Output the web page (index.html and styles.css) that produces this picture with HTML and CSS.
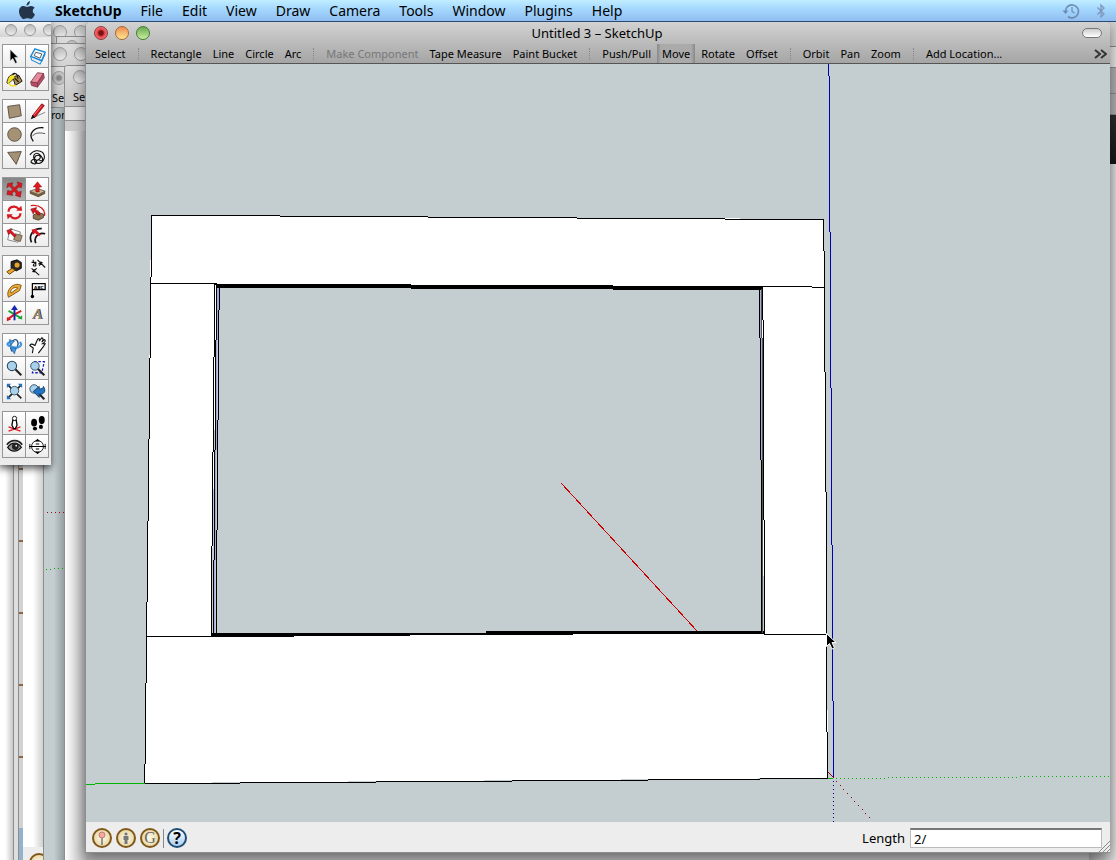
FILE: index.html
```
<!doctype html>
<html lang="en">

<head>
  <meta charset="utf-8">
  <title>Untitled 3 – SketchUp</title>
  <link rel="stylesheet" href="styles.css">
</head>

<body>
  <nav class="menubar">
    <button class="apple" aria-label="Apple menu">
      <svg width="18" height="20" viewBox="0 0 18 20">
        <path fill="#24354a" d="M12 0C12 2.600 10.500 4.400 8.500 4.800C8.400 2.500 10 .6 12 0ZM9.200 6C10.300 6 11.200 5 13 5C14.600 5 15.800 5.700 16.600 6.800C14 8.400 14.300 12.200 17 13.300C16 16 14.500 18 13 18C11.600 18 11.100 17.300 9.500 17.300C7.900 17.300 7.400 18 6 18C3.800 18 1 13.800 1 10.400C1 7 3.100 5 5.500 5C7.100 5 8.200 6 9.200 6Z" />
      </svg>
    </button>
    <button><b>SketchUp</b></button>
    <button>File</button>
    <button>Edit</button>
    <button>View</button>
    <button>Draw</button>
    <button>Camera</button>
    <button>Tools</button>
    <button>Window</button>
    <button>Plugins</button>
    <button>Help</button>
    <div class="extras">
      <svg width="18" height="18" viewBox="0 0 18 18" fill="none" stroke="#6f8cb0" stroke-width="1.600">
        <path d="M3.500 10A6.500 6.500 0 1 1 6 14.500" />
        <path d="M10 5V9.500L12.500 11" stroke-width="1.200" />
        <path d="M.5 8.500H6.500L3.500 12Z" fill="#6f8cb0" stroke="none" />
      </svg>
      <svg width="10" height="16" viewBox="0 0 10 16" fill="none" stroke="#7d98bb" stroke-width="1.300">
        <path d="M1.500 4.500L8 11L5 14V2L8 5L1.500 11.500" />
      </svg>
    </div>
  </nav>

  <main class="desktop">
    <!-- windows behind the front one, back to front -->
    <div class="window far-a"></div>
    <div class="window far-b"></div>
    <div class="window far-c">
      <div class="statusbar"><span class="coin"></span></div>
    </div>
    <div class="window stack-a">
      <div class="lights off"><i></i><i></i><i></i></div>
    </div>
    <div class="window stack-b">
      <div class="lights off"><i></i><i></i><i></i></div>
    </div>
    <div class="window stack-c">
      <div class="lights off"><i></i><i></i><i></i></div>
    </div>
    <div class="window model">
      <div class="lights off edited"><i></i><i></i><i></i></div>
      <div class="back-tools">Se</div>
      <div class="scene">Fron</div>
      <svg class="back-axes" width="24" height="70" viewBox="0 0 24 70" shape-rendering="crispEdges">
        <path d="M3 5.500H24" stroke="#a00000" stroke-dasharray="1 3" />
        <path d="M2 62.500H10" stroke="#00a800" stroke-dasharray="1 3" />
        <path d="M10 61.500H24" stroke="#00a800" stroke-dasharray="1 3" />
      </svg>
    </div>
    <div class="window page">
      <div class="lights off"><i></i><i></i><i></i></div>
      <div class="back-tools">Se</div>
      <div class="strip"></div>
      <div class="band"></div>
    </div>
    <div class="edge">
      <div class="edge-title"></div>
      <div class="edge-light"></div>
      <div class="edge-gray"></div>
      <div class="edge-gray"></div>
      <div class="edge-black"></div>
    </div>

    <section class="window front">
      <header class="head">
        <div class="titlebar">
          <div class="lights">
            <button class="red" aria-label="Close"></button>
            <button class="amber" aria-label="Minimize"></button>
            <button class="green" aria-label="Zoom window"></button>
          </div>
          <h1>Untitled 3 – SketchUp</h1>
          <button class="pill" aria-label="Toggle toolbar"></button>
        </div>
        <div class="toolbar">
          <button>Select</button>
          <span class="sep"></span>
          <button>Rectangle</button>
          <button>Line</button>
          <button>Circle</button>
          <button>Arc</button>
          <span class="sep"></span>
          <button disabled>Make Component</button>
          <button>Tape Measure</button>
          <button>Paint Bucket</button>
          <span class="sep"></span>
          <button>Push/Pull</button>
          <button class="pressed">Move</button>
          <button>Rotate</button>
          <button>Offset</button>
          <span class="sep"></span>
          <button>Orbit</button>
          <button>Pan</button>
          <button>Zoom</button>
          <span class="sep"></span>
          <button>Add Location...</button>
          <button class="more" aria-label="More tools">
            <svg width="13" height="10" viewBox="0 0 13 10" fill="none" stroke="#333" stroke-width="2">
              <path d="M1 1L6 5L1 9M7 1L12 5L7 9" />
            </svg>
          </button>
        </div>
      </header>

      <div class="canvas">
        <svg class="drawing" viewBox="86 64 1024 758" preserveAspectRatio="xMinYMin slice" shape-rendering="crispEdges" fill="none">
          <!-- blue axis -->
          <path d="M828.500 64V76M829.500 76V232M830.500 232V388M831.500 388V545M832.500 545V701M833.500 701V778" stroke="#0000b4" />
          <path d="M833.500 781V822" stroke="#00008c" stroke-dasharray="1 3" />
          <!-- frame -->
          <path fill="#fff" fill-rule="evenodd" d="M151 215L824 219L828 778L145 783ZM217 285L211 636L764 633L761 288Z" />
          <path stroke="#000" d="M151.500 215.500H280M280 216.500H428M428 217.500H577M577 218.500H725M725 219.500H824" />
          <path stroke="#000" d="M151.500 215V277M150.500 277V358M149.500 358V439M148.500 439V521M147.500 521V602M146.500 602V683M145.500 683V764M144.500 764V783" />
          <path stroke="#000" d="M823.500 219V251M824.500 251V372M825.500 372V492M826.500 492V612M826.500 612V732M827.500 732V778" />
          <path stroke="#000" d="M144 783.500H240M240 782.500H376M376 781.500H512M512 780.500H648M648 779.500H760M760 778.500H828" />
          <path stroke="#000" d="M150 283.500H217M762 286.500H812M812 287.500H825M147 636.500H294M764 634.500H826" />
          <!-- inner edges -->
          <path fill="#000" d="M215 284H411V285H613V286H762V290H613V289H411V288H217ZM211 633H486V631H650V631H764V634H573V635H410V636H211Z" />
          <path stroke="#000" d="M214.500 284V357M213.500 357V452M212.500 452V546M211.500 546V636" />
          <path stroke="#000" d="M216.500 286V340M215.500 340V450M214.500 450V560M213.500 560V634" />
          <path stroke="#a8a8e0" d="M217.500 288V340M216.500 340V450M215.500 450V560M214.500 560V633" />
          <path stroke="#000" d="M219.500 287V310M218.500 310V420M217.500 420V530M216.500 530V634" />
          <path stroke="#a8a8e0" d="M218.500 288V310" />
          <path stroke="#000" d="M759.500 289V338M760.500 338V460M761.500 460V633" />
          <path stroke="#a8a8e0" d="M760.500 290V338M761.500 338V460" />
          <path stroke="#555" d="M761.500 289V338M762.500 338V633" />
          <path stroke="#000" d="M762.500 287V320M763.500 320V520M764.500 520V634" />
          <!-- move line and red axis -->
          <path d="M561.500 483.500L697.500 631.500" stroke="#c80000" />
          <path d="M828 772L834 778" stroke="#a00000" />
          <path d="M836 781.500h1M840 785.500h1M843 789.500h1M847 793.500h1M851 797.500h1M854 801.500h1M858 805.500h1M862 809.500h1M865 813.500h1M869 817.500h1" stroke="#a00000" />
          <!-- green axis -->
          <path d="M86 784.500H95M95 783.500H145M828 778.500H833" stroke="#00b400" />
          <path d="M836 778.500H888M888 777.500H1018M1020 776.500H1110" stroke="#00b400" stroke-dasharray="1 3" />
          <!-- pointer -->
          <path shape-rendering="auto" d="M826.500 633.500V646.500L829.500 643.500L832 649L834.500 648L832 642.500H836Z" fill="#000" stroke="#fff" />
        </svg>
      </div>

      <footer class="statusbar">
        <button class="coin" aria-label="Geo-location">
          <svg width="16" height="16" viewBox="0 0 16 16">
            <path d="M8 7V15" stroke="#777" stroke-width="1.500" />
            <circle cx="8" cy="5" r="3" fill="#f4a8a0" stroke="#c08078" />
          </svg>
        </button>
        <button class="coin" aria-label="Credits">
          <svg width="16" height="16" viewBox="0 0 16 16" fill="#777">
            <circle cx="8" cy="4" r="1.600" />
            <path d="M5.500 6H10.500V10H9.500V14H6.500V10H5.500Z" />
          </svg>
        </button>
        <button class="coin letter">G</button>
        <span class="divider"></span>
        <button class="coin help">?</button>
        <label for="length">Length</label>
        <input id="length" type="text" value="2/">
        <svg class="grip" width="12" height="12" viewBox="0 0 12 12" stroke="#888">
          <path d="M1 12L12 1M5 12L12 5M9 12L12 9" />
        </svg>
      </footer>
    </section>

    <aside class="palette">
      <div class="lights off"><i></i><i></i><i></i></div>
      <div class="group">
        <button aria-label="Select"><svg viewBox="0 0 20 20"><path d="M5 2V15L8 12L11 18L13 17L10 11H14Z" fill="#000" stroke="#bbb" stroke-width=".6" /></svg></button>
        <button aria-label="Make Component"><svg viewBox="0 0 20 20" fill="none" stroke="#1687d4" stroke-width="1.600"><path d="M7 1L19 5L15 15L2 10Z" /><path d="M8 5L15 7L13 12L6 9Z" fill="#fff" stroke="#345" stroke-width="1" /><path d="M2 10L3 14L13 19L15 15L19 7" stroke-width="1.200" /></svg></button>
        <button aria-label="Paint Bucket"><svg viewBox="0 0 20 20"><path d="M8 7L15 5L19 12L11 17Z" fill="#a98a50" stroke="#000" /><path d="M6 8C8 0 14 2 14 9M8 6L15 13" fill="none" stroke="#111" stroke-width="1.300" /><path d="M10 4C3 4 2 9 1 14C4 17 5 11 10 9" fill="#f4df29" stroke="#222" /><path d="M3 14C5 18 9 18 12 17" fill="none" stroke="#f4df29" stroke-width="1.500" /></svg></button>
        <button aria-label="Eraser"><svg viewBox="0 0 20 20"><path d="M2 13L10 2L17 3L10 14Z" fill="#e68b9d" stroke="#823849" /><path d="M2 13L10 14V19L3 17ZM10 14L17 3L18 8L10 19Z" fill="#b44d66" stroke="#823849" /></svg></button>
      </div>
      <div class="group">
        <button aria-label="Rectangle"><svg viewBox="0 0 20 20"><path d="M2 4L16 2L18 15L4 18Z" fill="#a59174" stroke="#4e4537" /></svg></button>
        <button aria-label="Line"><svg viewBox="0 0 20 20"><path d="M3 18L19 11" stroke="#777" /><path d="M4 15L15 1L18 3L7 17Z" fill="#e01822" stroke="#500" stroke-width=".8" /><path d="M2 19L4 14L7 17Z" fill="#111" /><path d="M6 14L15 3" stroke="#ff8080" /></svg></button>
        <button aria-label="Circle"><svg viewBox="0 0 20 20"><circle cx="10" cy="10" r="8" fill="#a59174" stroke="#4e4537" /></svg></button>
        <button aria-label="Arc"><svg viewBox="0 0 20 20" fill="none" stroke="#111" stroke-width="1.600"><path d="M5 18C-2 9 6 1 17 2" /><path d="M4 12C6 9 10 7 19 9" stroke-width=".8" /></svg></button>
        <button aria-label="Polygon"><svg viewBox="0 0 20 20"><path d="M2 4L18 3L12 18Z" fill="#a59174" stroke="#4e4537" /></svg></button>
        <button aria-label="Freehand"><svg viewBox="0 0 20 20" fill="none" stroke="#111" stroke-width="1.300"><path d="M1 7C5 1 12 1 16 4C21 10 16 17 11 17C6 17 5 11 8 8C12 6 15 9 12 12C8 15 4 12 6 7C9 3 12 6 14 8C18 13 15 16 11 12M2 15C5 10 9 11 9 16C7 19 4 17 2 15" /></svg></button>
      </div>
      <div class="group">
        <button class="pressed" aria-label="Move"><svg viewBox="0 0 20 20"><path d="M2 3L8 2L7 5L10 8L14 4L13 1L19 3L18 8L15 7L12 10L15 13L18 12L17 19L11 17L12 15L10 12L7 14L8 17L1 16L2 11L5 12L8 10L4 6L1 8Z" fill="#d81820" stroke="#701014" stroke-width=".5" /></svg></button>
        <button aria-label="Push/Pull"><svg viewBox="0 0 20 20"><path d="M1 12L10 9L19 12L11 16Z" fill="#cdb58b" stroke="#555" /><path d="M1 12V15L11 19L19 15V12L11 16Z" fill="#705c3e" /><path d="M8 13V7H5L10 1L15 7H12V13Z" fill="#e01820" stroke="#700" stroke-width=".5" /></svg></button>
        <button aria-label="Rotate"><svg viewBox="0 0 20 20" fill="none" stroke="#d81820" stroke-width="2.500"><path d="M3 9C3 3 11 1 15 6M17 11C17 17 9 19 5 14" /><path d="M12 8L19 8L18 2ZM8 12L1 12L2 18Z" fill="#d81820" stroke="none" /></svg></button>
        <button aria-label="Follow Me"><svg viewBox="0 0 20 20"><path d="M5 13L11 10L17 12V16L11 19L5 17Z" fill="#8a7350" stroke="#4d402c" /><path d="M2 2C13 0 20 7 18 14" fill="none" stroke="#d81820" stroke-width="1.600" /><path d="M2 6L9 4L8 7C12 8 13 10 13 13H10C9 11 8 10 6 9L5 12Z" fill="#d81820" stroke="#600" stroke-width=".5" /></svg></button>
        <button aria-label="Scale"><svg viewBox="0 0 20 20"><path d="M5 2L17 6L14 18L2 15Z" fill="#fff" stroke="#777" /><path d="M11 8L19 10L17 17L9 15Z" fill="#a59174" stroke="#665842" /><path d="M1 4L7 2L6 4L12 10L10 12L5 7L3 9Z" fill="#d81820" stroke="#600" stroke-width=".5" /></svg></button>
        <button aria-label="Offset"><svg viewBox="0 0 20 20" fill="none" stroke="#111" stroke-width="2"><path d="M3 18C-1 10 5 1 15 2M8 19C5 12 11 6 19 8" /><path d="M3 3L10 2L9 4L14 9L12 11L7 7L5 9Z" fill="#d81820" stroke="none" /></svg></button>
      </div>
      <div class="group">
        <button aria-label="Tape Measure"><svg viewBox="0 0 20 20"><path d="M6 3L13 1L18 4V11L12 14L6 11Z" fill="#292824" stroke="#000" /><circle cx="13" cy="7" r="3" fill="#e9a326" /><path d="M7 11L1 15L4 18L11 13Z" fill="#f0a527" stroke="#51360a" /></svg></button>
        <button aria-label="Dimension"><svg viewBox="0 0 20 20" fill="none" stroke="#111" stroke-width="1.300"><path d="M3 4H8V8C4 9 4 6 8 5M5 1V4M3 11L12 19M10 1L19 10M6 14L9 11M12 8L14 5M4 15L8 12M11 6L16 4M6 12V16M14 3V7" /></svg></button>
        <button aria-label="Protractor"><svg viewBox="0 0 20 20"><path d="M3 18C-1 10 9 -1 18 4L16 10Z" fill="#eba832" stroke="#704b11" /><path d="M6 13C4 9 10 5 14 7Z" fill="#fff" stroke="#704b11" /></svg></button>
        <button aria-label="Text"><svg viewBox="0 0 20 20"><path d="M4 17V2H19V9H4" fill="#fff" stroke="#000" stroke-width="1.500" /><circle cx="4" cy="17" r="2" /><text class="tag" x="6" y="8">ABC</text></svg></button>
        <button aria-label="Axes"><svg viewBox="0 0 20 20" stroke-width="2.300"><path d="M10 11L3 7M10 11L17 15" stroke="#16a832" /><path d="M10 11L3 16M10 11L18 7" stroke="#d81820" /><path d="M10 18V4" stroke="#1726b0" /><path d="M6 6L10 0L14 6Z" fill="#1726b0" /><path d="M1 14V19L6 17Z" fill="#d81820" /><path d="M19 12V17L14 16Z" fill="#16a832" /></svg></button>
        <button aria-label="3D Text"><svg viewBox="0 0 20 20"><text class="deep" x="5" y="17">A</text><text class="deep face" x="4" y="16">A</text></svg></button>
      </div>
      <div class="group">
        <button aria-label="Orbit"><svg viewBox="0 0 20 20" fill="none"><path d="M7 17C3 9 9 0 13 4C16 8 13 14 9 16" stroke="#26527f" stroke-width="1.500" /><path d="M16 6C21 9 15 14 9 12C2 11 -1 8 5 6" stroke="#3f97e4" stroke-width="2.500" /><path d="M5 13L12 13L10 20ZM4 3L10 5L5 10Z" fill="#3f97e4" stroke="#123b68" stroke-width=".5" /></svg></button>
        <button aria-label="Pan"><svg viewBox="0 0 20 20"><path d="M4 19L5 13L1 10C2 7 5 9 7 10L10 3C11 1 13 2 12 5L15 1C17 1 17 3 15 6L18 3C20 4 19 6 16 8L19 8C17 12 14 15 11 19" fill="#fff" stroke="#111" stroke-width="1.300" /></svg></button>
        <button aria-label="Zoom"><svg viewBox="0 0 20 20"><path d="M11 11L18 18" stroke="#222" stroke-width="2.500" /><circle cx="7" cy="7" r="5.500" fill="#a9d1e9" stroke="#26465b" stroke-width="1.200" /></svg></button>
        <button aria-label="Zoom Window"><svg viewBox="0 0 20 20"><path d="M6 2H18L15 15H4Z" fill="none" stroke="#161cc0" stroke-width="1.500" stroke-dasharray="3 2" /><path d="M10 10L18 18" stroke="#222" stroke-width="2.500" /><circle cx="7" cy="7" r="5" fill="#a9d1e9" stroke="#26465b" /></svg></button>
        <button aria-label="Zoom Extents"><svg viewBox="0 0 20 20"><path d="M3 3L18 18M17 3L3 17" stroke="#222" stroke-width="2" /><path d="M1 1H6L1 6ZM19 1V6L14 1ZM1 19V14L6 19Z" fill="#2373c4" /><circle cx="10" cy="9" r="5" fill="#a9d1e9" stroke="#26465b" /></svg></button>
        <button aria-label="Previous View"><svg viewBox="0 0 20 20"><path d="M12 13L18 19" stroke="#222" stroke-width="2.500" /><circle cx="6" cy="7" r="5" fill="#a9d1e9" stroke="#26465b" /><path d="M5 10L12 4V7C15 7 17 6 17 4C21 10 17 14 12 13V17Z" fill="#2373c4" stroke="#11355d" /></svg></button>
      </div>
      <div class="group">
        <button aria-label="Position Camera"><svg viewBox="0 0 20 20"><path d="M3 14L17 19M17 14L3 19" stroke="#e01820" stroke-width="1.500" /><path d="M8 6H12L13 12L11 16H9L7 12Z" fill="#fff" stroke="#000" stroke-width="1.500" /><circle cx="10" cy="4" r="2.500" fill="#fff" stroke="#000" /></svg></button>
        <button aria-label="Walk"><svg viewBox="0 0 20 20"><ellipse cx="6" cy="9" rx="3.500" ry="4.500" /><ellipse cx="7" cy="16" rx="2.500" ry="2.200" /><ellipse cx="15" cy="6" rx="3.500" ry="4.800" /><ellipse cx="14" cy="14" rx="2.400" ry="2.400" /></svg></button>
        <button aria-label="Look Around"><svg viewBox="0 0 20 20"><path d="M1 8C6 1 15 2 19 8" fill="none" stroke="#222" stroke-width="2" /><path d="M2 11C7 4 14 5 18 11C13 17 6 17 2 11Z" fill="#999" stroke="#111" stroke-width="1.500" /><circle cx="11" cy="10" r="4" fill="#222" /><circle cx="12" cy="9" r="1" fill="#fff" /></svg></button>
        <button aria-label="Section Plane"><svg viewBox="0 0 20 20"><circle cx="10" cy="10" r="7" fill="#fff" stroke="#000" /><path d="M7 4L10 1L13 4ZM7 16L10 19L13 16Z" fill="#000" /><path d="M0 10H20M8 7H12M8 13H12" stroke="#000" stroke-width="1.300" /><path d="M1 7V13M19 7V13" stroke="#000" stroke-width="1" /></svg></button>
      </div>
    </aside>
  </main>
</body>

</html>
```
FILE: styles.css
```
* {
  box-sizing: border-box;
}

body {
  margin: 0;
  height: 100vh;
  display: flex;
  flex-direction: column;
  overflow: hidden;
  font-family: "Noto Sans", "Open Sans", sans-serif;
  color: #000;
}

button {
  font: inherit;
  color: inherit;
  margin: 0;
  padding: 0;
  border: 0;
  background: none;
}

svg {
  display: block;
}

/* menu bar */
.menubar {
  flex: none;
  display: flex;
  align-items: center;
  gap: 19px;
  height: 22px;
  padding: 0 10px 0 18px;
  font-size: 14px;
  line-height: 20px;
  background: linear-gradient(#c0edff, #a6d9ff 40%, #90bdf0);
  border-bottom: 1px solid #2c4a70;
}

.extras {
  display: flex;
  align-items: center;
  gap: 16px;
  margin-left: auto;
}

/* desktop and windows */
.desktop {
  position: relative;
  flex: 1;
  overflow: hidden;
  background: #dedede;
}

.window {
  position: absolute;
  overflow: hidden;
  background: linear-gradient(#dcdcdc, #c4c4c4 60px);
  border: solid #8e8e8e;
  border-width: 1px 0 0 1px;
}

.far-a {
  left: -1px;
  top: 0;
  bottom: 0;
  width: 15px;
  background: linear-gradient(90deg, #fff 40%, #c8c8c8);
  border-right-width: 1px;
}

.far-b {
  left: 18px;
  top: 0;
  bottom: 0;
  width: 60px;
  background: repeating-linear-gradient(#d2d2d2 0 13px, #886644 13px 15px, #d2d2d2 15px 72px);
}

.far-b::after {
  content: "";
  display: block;
  height: 40px;
  margin-top: 805px;
  background: #94b3cb;
}

.far-c {
  display: flex;
  flex-direction: column;
  justify-content: flex-end;
  left: 23px;
  top: 0;
  bottom: -17px;
  width: 60px;
  background: linear-gradient(90deg, #fff 10px, #d0d0d0 20px);
  border-left: 0;
}

.stack-a {
  left: 44px;
  top: -1px;
  width: 60px;
  height: 50px;
}

.stack-b {
  left: 56px;
  top: 14px;
  width: 60px;
  height: 50px;
}

.stack-c {
  left: 44px;
  top: 21px;
  width: 60px;
  height: 50px;
}

.model {
  left: 43px;
  top: 44px;
  bottom: 0;
  width: 22px;
  background: linear-gradient(90deg, #c4ced0 10px, #8c9699 22px);
}

.page {
  left: 64px;
  right: 27px;
  top: 43px;
  bottom: 0;
  background: linear-gradient(90deg, #fff, #b4b4b4 22px);
  border-radius: 4px 0 0 0;
}

.model .lights,
.page .lights {
  height: 21px;
  background: linear-gradient(#dedede, #d0d0d0);
}

.back-tools {
  height: 20px;
  padding-left: 8px;
  font-size: 11px;
  line-height: 20px;
  background: linear-gradient(#d0d0d0, #c6c6c6);
  border-bottom: 1px solid #909090;
}

.scene {
  height: 15px;
  padding-left: 2px;
  font-size: 10px;
  line-height: 15px;
}

.back-axes {
  margin-top: 384px;
}

.strip {
  height: 14px;
  background: #e3e3e3;
  border-bottom: 1px solid #909090;
}

.band {
  height: 10px;
  background: #cbcbcb;
}

.edge {
  position: absolute;
  top: 0;
  right: 0;
  bottom: 0;
  width: 27px;
  background: linear-gradient(90deg, #9a9a9a, #dedede);
}

.edge-title {
  height: 25px;
  background: #d2d2d2;
  border-bottom: 1px solid #888;
}

.edge-light {
  height: 21px;
  background: #e4e4e4;
  border-bottom: 1px solid #888;
}

.edge-gray {
  height: 26px;
  background: #adadad;
  border-bottom: 1px solid #888;
}

.edge-gray + .edge-gray {
  height: 21px;
}

.edge-black {
  height: 49px;
  background: linear-gradient(#2b2b2b, #151515);
}

.front {
  display: flex;
  flex-direction: column;
  left: 85px;
  right: 6px;
  top: 0;
  bottom: 7px;
  background: #ededed;
  border-width: 0 0 1px 1px;
  border-radius: 5px 5px 0 0;
  box-shadow: 0 4px 14px rgba(0, 0, 0, .45);
}

.head {
  flex: none;
  background: linear-gradient(#d2d2d2, #a5a5a5);
  border-bottom: 1px solid #555;
}

.titlebar {
  display: flex;
  align-items: center;
  height: 22px;
  padding-right: 8px;
}

.titlebar h1 {
  flex: 1;
  margin: 0;
  font-size: 13px;
  font-weight: normal;
  line-height: 22px;
  text-align: center;
  padding-right: 38px;
}

.lights {
  display: flex;
  align-items: center;
  gap: 7px;
  height: 20px;
  padding-left: 8px;
}

.lights button,
.lights i {
  flex: none;
  width: 14px;
  height: 14px;
  border: 1px solid #777;
  border-radius: 50%;
}

.lights i {
  border-color: #999;
  background: linear-gradient(#bcbcbc, #ececec);
}

.edited i:first-child {
  background: radial-gradient(circle, #888 2px, #c4c4c4 4px);
}

.lights .red {
  border-color: #90383a;
  background: radial-gradient(circle, #7c1010 2px, #ea5055 4px, #f49090);
}

.lights .amber {
  border-color: #a96538;
  background: linear-gradient(#ec8c50, #ffe690);
}

.lights .green {
  border-color: #477a38;
  background: linear-gradient(#68a850, #c9f09e);
}

.pill {
  width: 20px;
  height: 10px;
  border: 1px solid #777;
  border-radius: 5px;
  background: linear-gradient(#ccc, #fff);
}

.toolbar {
  display: flex;
  align-items: center;
  gap: 1px;
  height: 19px;
  padding: 0 3px 0 4px;
  font-size: 11px;
  line-height: 19px;
}

.toolbar button {
  height: 19px;
  padding: 0 5px;
  white-space: nowrap;
}

.toolbar button:disabled {
  color: #777;
}

.toolbar .pressed {
  background: linear-gradient(90deg, #888, #aaa 4px, #aaa calc(100% - 4px), #888);
}

.toolbar .more {
  margin-left: auto;
  padding: 0;
}

.sep {
  width: 1px;
  height: 12px;
  margin: 0 6px;
  border-left: 1px dotted #888;
}

.canvas {
  position: relative;
  flex: 1;
  min-height: 0;
  background: #c4ced0;
}

.drawing {
  width: 100%;
  height: 100%;
}

/* status bar */
.statusbar {
  flex: none;
  display: flex;
  align-items: center;
  gap: 4px;
  height: 30px;
  padding: 2px 0 0 6px;
  font-size: 13px;
  background: #ededed;
}

.statusbar label {
  margin-left: auto;
}

.statusbar input {
  width: 192px;
  height: 20px;
  margin: 0 -8px 0 1px;
  padding: 0 3px;
  font: inherit;
  border: 1px solid #bbb;
  border-top: 2px solid #777;
  background: #fff;
  outline: 0;
}

.coin {
  display: flex;
  flex: none;
  align-items: center;
  justify-content: center;
  width: 20px;
  height: 20px;
  border: 2px solid #805818;
  border-radius: 50%;
  background: radial-gradient(#fffbe8, #e0cc94);
}

.statusbar .letter {
  font: 16px/16px "Liberation Serif", serif;
  color: #666;
}

.statusbar .help {
  font-size: 16px;
  font-weight: bold;
  line-height: 16px;
  border-color: #1d4d74;
  background: linear-gradient(#fff, #a9cdf0);
}

.divider {
  width: 1px;
  height: 19px;
  margin: 0 -1px;
  background: #888;
}

.grip {
  align-self: flex-end;
}

/* tool palette */
.palette {
  position: absolute;
  left: -1px;
  top: 0;
  display: flex;
  flex-direction: column;
  gap: 8px;
  width: 52px;
  padding-bottom: 7px;
  background: #ebebeb;
  box-shadow: 0 3px 8px rgba(0, 0, 0, .7);
}

.palette .lights {
  height: 15px;
  margin-bottom: -1px;
  padding-left: 6px;
  overflow: hidden;
  background: linear-gradient(#f4f4f4, #d4d4d4);
}

.palette .lights i {
  width: 12px;
  height: 12px;
}

.group {
  display: grid;
  grid-template-columns: 22px 22px;
  grid-auto-rows: 22px;
  gap: 1px;
  width: 47px;
  margin-left: 3px;
  padding: 1px;
  background: #969696;
}

.group button {
  display: flex;
  align-items: center;
  justify-content: center;
  background: linear-gradient(#fff, #ececec);
}

.group .pressed {
  background: linear-gradient(#858585, #b0b0b0);
}

.group svg {
  width: 17px;
  height: 17px;
}

.tag {
  font: bold 5px "DejaVu Sans", sans-serif;
}

.deep {
  font: italic bold 18px "Liberation Serif", serif;
  fill: #28231c;
}

.face {
  fill: #94866f;
}
```
